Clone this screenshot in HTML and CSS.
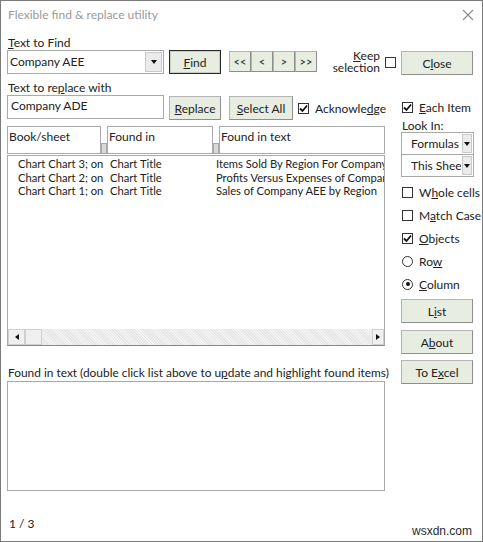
FILE: index.html
```html
<!DOCTYPE html>
<html lang="en">
<head>
  <meta charset="UTF-8" />
  <title>Flexible find &amp; replace utility</title>
  <link rel="stylesheet" href="styles.css">
</head>
<body>

<div class="dialog">
  <div class="titlebar">
    <span class="title">Flexible find &amp; replace utility</span>
    <svg class="close-x" width="12" height="12" viewBox="0 0 12 12">
      <path d="M1 1 L11 11 M11 1 L1 11" stroke="#8a8a8a" stroke-width="1.1" fill="none"/>
    </svg>
  </div>

  <div class="main">
    <!-- left: search fields, results list, preview -->
    <div class="left">
      <div class="label"><u>T</u>ext to Find</div>
      <div class="row">
        <div class="combo">
          <span class="combo-text">Company AEE</span>
          <span class="combo-btn"><span class="tri"></span></span>
        </div>
        <button class="btn btn-default btn-find"><u>F</u>ind</button>
        <div class="nav">
          <button class="btn btn-nav">&lt;&lt;</button>
          <button class="btn btn-nav">&lt;</button>
          <button class="btn btn-nav">&gt;</button>
          <button class="btn btn-nav">&gt;&gt;</button>
        </div>
        <div class="keep">
          <span class="keep-text"><u>K</u>eep<br>selection</span>
          <span class="box"></span>
        </div>
      </div>

      <div class="label">Text to re<u>p</u>lace with</div>
      <div class="row">
        <div class="textbox">Company ADE</div>
        <button class="btn btn-replace"><u>R</u>eplace</button>
        <button class="btn btn-select"><u>S</u>elect All</button>
        <label class="check">
          <span class="box checked"><svg width="9" height="9" viewBox="0 0 9 9"><path d="M1 4.5 L3.5 7 L8 1.5" stroke="#111" stroke-width="1.8" fill="none"/></svg></span>
          <span>Acknowle<u>d</u>ge</span>
        </label>
      </div>

      <div class="headers">
        <div class="hcell h1">Book/sheet</div>
        <div class="grip"></div>
        <div class="hcell h2">Found in</div>
        <div class="grip"></div>
        <div class="hcell h3">Found in text</div>
      </div>

      <div class="list">
        <div class="rows">
          <div class="lrow"><span class="c1">Chart Chart 3; on</span><span class="c2">Chart Title</span><span class="c3">Items Sold By Region For Company AEE</span></div>
          <div class="lrow"><span class="c1">Chart Chart 2; on</span><span class="c2">Chart Title</span><span class="c3">Profits Versus Expenses of Company AEE</span></div>
          <div class="lrow"><span class="c1">Chart Chart 1; on</span><span class="c2">Chart Title</span><span class="c3">Sales of Company AEE by Region</span></div>
        </div>
        <div class="hscroll">
          <span class="sb-arrow"><span class="tri-left"></span></span>
          <span class="sb-thumb"></span>
          <span class="sb-track"></span>
          <span class="sb-arrow"><span class="tri-right"></span></span>
        </div>
      </div>

      <div class="label label-found">Found in text (double click list above to u<u>p</u>date and highlight found items)</div>
      <div class="preview"></div>

      <div class="status">1 / 3</div>
    </div>

    <!-- right: options and actions -->
    <div class="right">
      <button class="btn btn-side btn-close">C<u>l</u>ose</button>

      <label class="check opt-each">
        <span class="box checked"><svg width="9" height="9" viewBox="0 0 9 9"><path d="M1 4.5 L3.5 7 L8 1.5" stroke="#111" stroke-width="1.8" fill="none"/></svg></span>
        <span><u>E</u>ach Item</span>
      </label>
      <div class="look">Look In:</div>
      <div class="combo combo-small">
        <span class="combo-text">Formulas</span>
        <span class="combo-btn"><span class="tri"></span></span>
      </div>
      <div class="combo combo-small combo-next">
        <span class="combo-text">This Sheet</span>
        <span class="combo-btn"><span class="tri"></span></span>
      </div>

      <div class="options">
        <label class="check"><span class="box"></span><span>W<u>h</u>ole cells</span></label>
        <label class="check"><span class="box"></span><span>M<u>a</u>tch Case</span></label>
        <label class="check">
          <span class="box checked"><svg width="9" height="9" viewBox="0 0 9 9"><path d="M1 4.5 L3.5 7 L8 1.5" stroke="#111" stroke-width="1.8" fill="none"/></svg></span>
          <span><u>O</u>bjects</span>
        </label>
        <label class="check"><span class="radio"></span><span>Ro<u>w</u></span></label>
        <label class="check"><span class="radio on"></span><span><u>C</u>olumn</span></label>
      </div>

      <button class="btn btn-side btn-list">L<u>i</u>st</button>
      <button class="btn btn-side">A<u>b</u>out</button>
      <button class="btn btn-side">To E<u>x</u>cel</button>
    </div>
  </div>

  <div class="footer">wsxdn.com</div>
</div>

</body>
</html>
```

FILE: styles.css
```css
body {
  margin: 0;
  background: #fff;
  font-family: Lato, "Noto Sans", sans-serif;
  font-size: 12px;
  color: #222;
}
u {
  text-decoration-thickness: 1px;
  text-underline-offset: 1px;
}
.dialog {
  position: relative;
  width: 483px;
  height: 542px;
  box-sizing: border-box;
  border: 1px solid #7a7a7a;
  background: #fff;
}
.titlebar {
  height: 29px;
  box-sizing: border-box;
  display: flex;
  align-items: center;
  justify-content: space-between;
  padding: 0 8px 3px 7px;
}
.title {
  color: #9a9a9a;
  font-size: 12px;
}
.close-x {
  margin-top: 2px;
}
.main {
  display: grid;
  grid-template-columns: 390px 72px;
  column-gap: 4px;
  padding-left: 6px;
}

/* left column */
.label {
  height: 20px;
  line-height: 26px;
  padding-left: 1px;
}
.row {
  display: flex;
  align-items: flex-start;
  height: 25px;
}
.combo {
  width: 157px;
  height: 24px;
  box-sizing: border-box;
  border: 1px solid #a8a8a8;
  display: flex;
  background: #fff;
}
.combo-text {
  flex: 1;
  padding: 3px 0 0 2px;
  white-space: nowrap;
  overflow: hidden;
}
.combo-btn {
  width: 15px;
  margin: 1px;
  background: #ebebeb;
  border: 1px solid #c9c9c9;
  display: flex;
  align-items: center;
  justify-content: center;
}
.tri {
  width: 0;
  height: 0;
  border-left: 3.5px solid transparent;
  border-right: 3.5px solid transparent;
  border-top: 4px solid #111;
}
.textbox {
  width: 157px;
  height: 24px;
  box-sizing: border-box;
  border: 1px solid #a8a8a8;
  padding: 2px 0 0 3px;
}
.btn {
  font-family: inherit;
  font-size: 12px;
  color: #222;
  background: #e7ede1;
  border: 1px solid #b4b4b4;
  border-right-color: #8e8e8e;
  border-bottom-color: #8e8e8e;
  padding: 0;
  height: 24px;
  box-sizing: border-box;
}
.btn-default {
  border: 1px solid #2a2a2a;
  box-shadow: inset 0 0 0 1px #c8cec2;
}
.btn-find {
  width: 52px;
  margin-left: 5px;
}
.nav {
  display: flex;
  margin-left: 8px;
  margin-top: 1px;
}
.btn-nav {
  width: 22px;
  height: 21px;
  font-size: 11px;
}
.keep {
  display: flex;
  align-items: center;
  margin-left: auto;
  margin-right: 1px;
}
.keep-text {
  text-align: right;
  line-height: 12px;
  margin-right: 5px;
}
.box {
  width: 11px;
  height: 11px;
  box-sizing: border-box;
  border: 1.5px solid #333;
  background: #fff;
  display: inline-flex;
  align-items: center;
  justify-content: center;
  flex: none;
}
.btn-replace {
  width: 52px;
  margin-left: 5px;
  margin-top: 1px;
}
.btn-select {
  width: 64px;
  margin-left: 8px;
  margin-top: 1px;
}
.check {
  display: flex;
  align-items: center;
  gap: 6px;
  white-space: nowrap;
}
.row .check {
  margin-left: 5px;
  margin-top: 6px;
}

.headers {
  display: flex;
  margin-top: 6px;
  width: 378px;
  height: 28px;
}
.hcell {
  border: 1px solid #aaa;
  box-sizing: border-box;
  height: 28px;
  padding: 2px 0 0 1px;
}
.h1 { width: 94px; }
.h2 { width: 106px; }
.h3 { flex: 1; }
.grip {
  width: 6px;
  align-self: flex-end;
  height: 11px;
  background: #d9d9d9;
  border: 1px solid #a8a8a8;
  box-sizing: border-box;
}

.list {
  width: 378px;
  height: 191px;
  box-sizing: border-box;
  border: 1px solid #aaa;
  border-bottom-color: #888;
  margin-top: 1px;
  display: flex;
  flex-direction: column;
}
.rows {
  flex: 1;
  padding-top: 1px;
  overflow: hidden;
  font-size: 11.2px;
}
.lrow {
  display: flex;
  line-height: 13.5px;
  white-space: nowrap;
}
.c1 { width: 92px; padding-left: 10px; flex: none; }
.c2 { width: 106px; flex: none; }
.c3 { overflow: hidden; width: 168px; }
.hscroll {
  height: 16px;
  display: flex;
  background: #ececec;
}
.sb-arrow {
  width: 17px;
  display: flex;
  align-items: center;
  justify-content: center;
  background: #f0f0f0;
  border: 1px solid #d0d0d0;
  box-sizing: border-box;
}
.hscroll .sb-arrow:last-child {
  width: 12px;
}
.tri-left {
  border-top: 3.5px solid transparent;
  border-bottom: 3.5px solid transparent;
  border-right: 4px solid #111;
}
.tri-right {
  border-top: 3.5px solid transparent;
  border-bottom: 3.5px solid transparent;
  border-left: 4px solid #111;
}
.sb-thumb {
  width: 17px;
  background: #f0f0f0;
  border: 1px solid #cfcfcf;
  box-sizing: border-box;
}
.sb-track {
  flex: 1;
  background: repeating-linear-gradient(45deg, #e6e6e6 0 1px, #f3f3f3 1px 2px);
}

.label-found {
  height: 35px;
  line-height: 14px;
  display: flex;
  align-items: flex-end;
  padding-bottom: 1px;
  box-sizing: border-box;
  white-space: nowrap;
  font-size: 11.9px;
}
.preview {
  width: 378px;
  height: 110px;
  box-sizing: border-box;
  border: 1px solid #a8a8a8;
}
.status {
  margin-top: 25px;
  padding-left: 2px;
}

/* right column */
.btn-side {
  width: 72px;
  height: 24px;
  display: block;
}
.btn-close {
  margin-top: 21px;
}
.opt-each {
  margin-top: 25px;
  margin-left: 1px;
}
.look {
  margin-top: 3px;
  padding-left: 1px;
}
.combo-small {
  width: 73px;
  height: 23px;
  margin-top: -1px;
}
.combo-small.combo-next {
  margin-top: -1px;
}
.combo-small .combo-text {
  padding: 3px 0 0 9px;
}
.combo-small .combo-btn {
  width: 8px;
  margin: 1px;
}
.options {
  display: flex;
  flex-direction: column;
  gap: 9px;
  margin-top: 8px;
  padding-left: 1px;
}
.options .check {
  height: 14px;
}
.radio {
  width: 11px;
  height: 11px;
  box-sizing: border-box;
  border: 1.5px solid #333;
  border-radius: 50%;
  display: inline-flex;
  align-items: center;
  justify-content: center;
}
.radio.on::after {
  content: "";
  width: 4px;
  height: 4px;
  border-radius: 50%;
  background: #111;
}
.btn-list {
  margin-top: 8px;
}
.btn-side + .btn-side {
  margin-top: 6px;
}
.btn-list + .btn-side {
  margin-top: 7px;
}

.footer {
  position: absolute;
  right: 10px;
  bottom: 3px;
  font-family: "Liberation Sans", Arial, sans-serif;
  font-size: 12px;
  color: #2a2a2a;
}
```
